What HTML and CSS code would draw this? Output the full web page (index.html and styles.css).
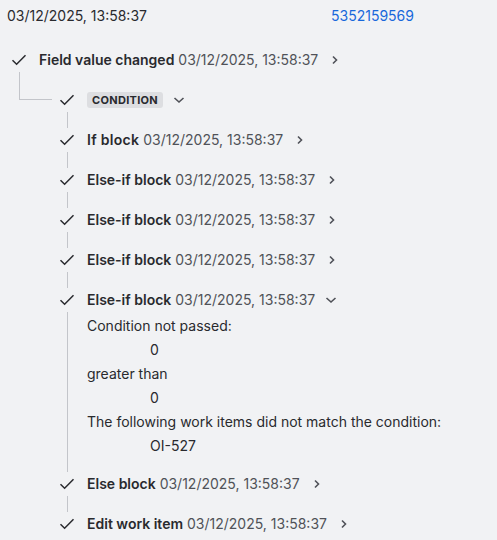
FILE: index.html
```html
<!DOCTYPE html>
<html>
<head>
<meta charset="utf-8">
<link rel="stylesheet" href="styles.css">
</head>
<body>
<div class="page">
  <div class="header">
    <span class="hdate">03/12/2025, 13:58:37</span>
    <a class="link">5352159569</a>
  </div>

  <div class="tree">
    <div class="row root-row">
      <span class="icon"><svg width="16" height="12" viewBox="0 0 16 12"><path d="M1.5 6.2 L5.6 10.2 L14.5 1.3" fill="none" stroke="#292a2e" stroke-width="1.5"/></svg></span>
      <span class="label"><b>Field value changed</b> <span class="date">03/12/2025, 13:58:37</span></span>
      <span class="chev"><svg width="8" height="10" viewBox="0 0 8 10"><path d="M2 1.5 L5.5 5 L2 8.5" fill="none" stroke="#505258" stroke-width="1.6"/></svg></span>
    </div>

    <div class="branch">
      <div class="elbow"></div>
      <div class="children">
        <div class="row">
          <span class="icon"><svg width="16" height="12" viewBox="0 0 16 12"><path d="M1.5 6.2 L5.6 10.2 L14.5 1.3" fill="none" stroke="#292a2e" stroke-width="1.5"/></svg></span>
          <span class="badge">CONDITION</span>
          <span class="chev down"><svg width="12" height="8" viewBox="0 0 12 8"><path d="M1.5 2 L6 6 L10.5 2" fill="none" stroke="#505258" stroke-width="1.6"/></svg></span>
        </div>

        <div class="stem"></div>
        <div class="row">
          <span class="icon"><svg width="16" height="12" viewBox="0 0 16 12"><path d="M1.5 6.2 L5.6 10.2 L14.5 1.3" fill="none" stroke="#292a2e" stroke-width="1.5"/></svg></span>
          <span class="label"><b class="wide">If block</b> <span class="date">03/12/2025, 13:58:37</span></span>
          <span class="chev"><svg width="8" height="10" viewBox="0 0 8 10"><path d="M2 1.5 L5.5 5 L2 8.5" fill="none" stroke="#505258" stroke-width="1.6"/></svg></span>
        </div>

        <div class="stem"></div>
        <div class="row">
          <span class="icon"><svg width="16" height="12" viewBox="0 0 16 12"><path d="M1.5 6.2 L5.6 10.2 L14.5 1.3" fill="none" stroke="#292a2e" stroke-width="1.5"/></svg></span>
          <span class="label"><b>Else-if block</b> <span class="date">03/12/2025, 13:58:37</span></span>
          <span class="chev"><svg width="8" height="10" viewBox="0 0 8 10"><path d="M2 1.5 L5.5 5 L2 8.5" fill="none" stroke="#505258" stroke-width="1.6"/></svg></span>
        </div>

        <div class="stem"></div>
        <div class="row">
          <span class="icon"><svg width="16" height="12" viewBox="0 0 16 12"><path d="M1.5 6.2 L5.6 10.2 L14.5 1.3" fill="none" stroke="#292a2e" stroke-width="1.5"/></svg></span>
          <span class="label"><b>Else-if block</b> <span class="date">03/12/2025, 13:58:37</span></span>
          <span class="chev"><svg width="8" height="10" viewBox="0 0 8 10"><path d="M2 1.5 L5.5 5 L2 8.5" fill="none" stroke="#505258" stroke-width="1.6"/></svg></span>
        </div>

        <div class="stem"></div>
        <div class="row">
          <span class="icon"><svg width="16" height="12" viewBox="0 0 16 12"><path d="M1.5 6.2 L5.6 10.2 L14.5 1.3" fill="none" stroke="#292a2e" stroke-width="1.5"/></svg></span>
          <span class="label"><b>Else-if block</b> <span class="date">03/12/2025, 13:58:37</span></span>
          <span class="chev"><svg width="8" height="10" viewBox="0 0 8 10"><path d="M2 1.5 L5.5 5 L2 8.5" fill="none" stroke="#505258" stroke-width="1.6"/></svg></span>
        </div>

        <div class="stem"></div>
        <div class="row">
          <span class="icon"><svg width="16" height="12" viewBox="0 0 16 12"><path d="M1.5 6.2 L5.6 10.2 L14.5 1.3" fill="none" stroke="#292a2e" stroke-width="1.5"/></svg></span>
          <span class="label"><b>Else-if block</b> <span class="date">03/12/2025, 13:58:37</span></span>
          <span class="chev down"><svg width="12" height="8" viewBox="0 0 12 8"><path d="M1.5 2 L6 6 L10.5 2" fill="none" stroke="#505258" stroke-width="1.6"/></svg></span>
        </div>
        <div class="details">
          <div class="dline">Condition not passed:</div>
          <div class="dline val">0</div>
          <div class="dline">greater than</div>
          <div class="dline val">0</div>
          <div class="dline">The following work items did not match the condition:</div>
          <div class="dline val">OI-527</div>
        </div>

        <div class="row">
          <span class="icon"><svg width="16" height="12" viewBox="0 0 16 12"><path d="M1.5 6.2 L5.6 10.2 L14.5 1.3" fill="none" stroke="#292a2e" stroke-width="1.5"/></svg></span>
          <span class="label"><b>Else block</b> <span class="date">03/12/2025, 13:58:37</span></span>
          <span class="chev"><svg width="8" height="10" viewBox="0 0 8 10"><path d="M2 1.5 L5.5 5 L2 8.5" fill="none" stroke="#505258" stroke-width="1.6"/></svg></span>
        </div>

        <div class="stem"></div>
        <div class="row">
          <span class="icon"><svg width="16" height="12" viewBox="0 0 16 12"><path d="M1.5 6.2 L5.6 10.2 L14.5 1.3" fill="none" stroke="#292a2e" stroke-width="1.5"/></svg></span>
          <span class="label"><b>Edit work item</b> <span class="date">03/12/2025, 13:58:37</span></span>
          <span class="chev"><svg width="8" height="10" viewBox="0 0 8 10"><path d="M2 1.5 L5.5 5 L2 8.5" fill="none" stroke="#505258" stroke-width="1.6"/></svg></span>
        </div>
      </div>
    </div>
  </div>
</div>
</body>
</html>
```

FILE: styles.css
```css
html, body {
  margin: 0;
  padding: 0;
  background: #f1f2f4;
}
body {
  font-family: Inter, "Noto Sans", sans-serif;
  font-size: 14px;
  color: #292a2e;
}
.page {
  width: 497px;
  height: 540px;
  overflow: hidden;
}
.header {
  display: flex;
  height: 20px;
  line-height: 20px;
  padding: 6px 0 0 7px;
}
.hdate {
  width: 324px;
  color: #292a2e;
}
.link {
  color: #1868db;
  text-decoration: none;
}
.tree {
  padding: 22px 0 0 4px;
}
.row {
  display: flex;
  align-items: center;
  height: 24px;
  line-height: 20px;
}
.icon {
  width: 30px;
  height: 24px;
  display: flex;
  align-items: center;
  justify-content: center;
  flex: none;
}
.icon svg {
  display: block;
}
.label {
  margin-left: 5px;
  white-space: nowrap;
}
.label b {
  font-weight: 600;
  color: #292a2e;
}
.label b.wide {
  letter-spacing: 0.3px;
}
.date {
  color: #505258;
}
.chev {
  display: flex;
  align-items: center;
  margin-left: 13px;
}
.chev.down {
  margin-left: 10px;
}
.badge {
  margin-left: 5px;
  background: #dddee1;
  border-radius: 3px;
  font-size: 11px;
  font-weight: 700;
  line-height: 16px;
  padding: 0 5px;
  color: #292a2e;
  letter-spacing: 0.3px;
}
.branch {
  display: flex;
  align-items: flex-start;
}
.elbow {
  flex: none;
  margin-left: 15px;
  width: 33px;
  height: 28px;
  border-left: 1px solid #c3c5ca;
  border-bottom: 1px solid #c3c5ca;
  box-sizing: border-box;
}
.children {
  margin-top: 16px;
}
.stem {
  width: 1px;
  height: 16px;
  margin-left: 15px;
  background: #c3c5ca;
}
.details {
  margin-left: 15px;
  border-left: 1px solid #c3c5ca;
  padding: 2px 0 14px 19px;
}
.dline {
  height: 24px;
  line-height: 24px;
  white-space: nowrap;
}
.dline.val {
  padding-left: 63px;
}
```
